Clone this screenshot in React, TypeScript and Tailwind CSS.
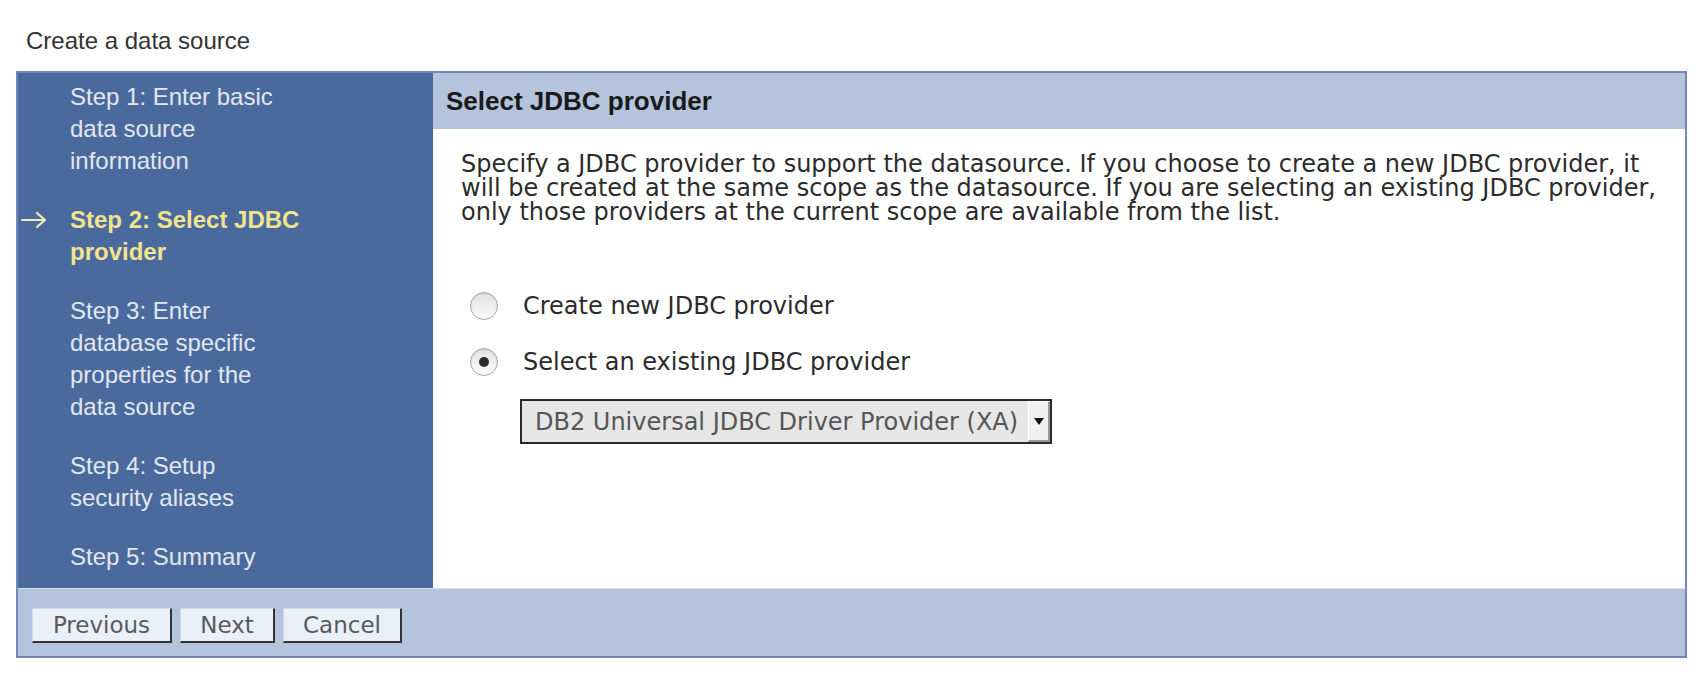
import React from "react";

const sans = { fontFamily: '"Liberation Sans", Arial, sans-serif' };
const deja = { fontFamily: '"DejaVu Sans", Verdana, sans-serif' };

const steps = [
  { text: "Step 1: Enter basic data source information", active: false },
  { text: "Step 2: Select JDBC provider", active: true },
  { text: "Step 3: Enter database specific properties for the data source", active: false },
  { text: "Step 4: Setup security aliases", active: false },
  { text: "Step 5: Summary", active: false },
];

function Radio({ checked }: { checked?: boolean }) {
  return (
    <div className="flex h-[28px] w-[28px] items-center justify-center rounded-full border border-[#a8a8a8] bg-gradient-to-b from-[#e2e2e2] to-[#fbfbfb] shadow-[inset_0_1px_2px_rgba(0,0,0,0.12)]">
      {checked && <div className="h-[10px] w-[10px] rounded-full bg-[#2a2a2a]" />}
    </div>
  );
}

function Btn({ label, w }: { label: string; w: string }) {
  return (
    <div
      className={`${w} flex h-[35px] items-center justify-center border-t border-l border-t-[#d8d8d8] border-l-[#d8d8d8] border-r-2 border-b-2 border-r-[#333] border-b-[#333] bg-[#eaf0fa] text-[23px] text-[#5a5a5a]`}
      style={deja}
    >
      {label}
    </div>
  );
}

export default function App() {
  return (
    <div className="min-h-[676px] w-[1708px] bg-white">
      <div className="pl-[26px] pt-[27px] text-[24px] leading-[28px] text-[#333]" style={sans}>
        Create a data source
      </div>
      <div className="ml-[16px] mt-[16px] w-[1671px] border-2 border-[#6f88b9]">
        <div className="flex">
          <div className="w-[415px] shrink-0 bg-[#4a6a9e] pb-[15px] pt-[8px]" style={sans}>
            {steps.map((s, i) => (
              <div key={i} className={`flex ${i < steps.length - 1 ? "mb-[27px]" : ""}`}>
                <div className="flex h-[32px] w-[52px] shrink-0 items-center pl-[3px]">
                  {s.active && (
                    <svg width="26" height="18" viewBox="0 0 26 18">
                      <path
                        d="M1 9 H24 M16 2 L24 9 L16 16"
                        fill="none"
                        stroke="#f4ecb4"
                        strokeWidth="2.2"
                        strokeLinecap="round"
                        strokeLinejoin="round"
                      />
                    </svg>
                  )}
                </div>
                <div
                  className={`w-[231px] text-[24px] leading-[32px] ${
                    s.active ? "font-bold text-[#f2e48f]" : "text-[#e3e7ef]"
                  }`}
                >
                  {s.text}
                </div>
              </div>
            ))}
          </div>
          <div className="flex-1 bg-white">
            <div
              className="flex h-[56px] items-center bg-[#b4c4dc] pl-[13px] text-[26px] font-bold text-[#1a1a1a]"
              style={sans}
            >
              Select JDBC provider
            </div>
            <div className="pl-[28px] pr-[12px] pt-[23px] text-[#2b2b2b]" style={deja}>
              <p className="text-[24px] leading-[24px]">
                Specify a JDBC provider to support the datasource. If you choose to create a new JDBC provider, it
                will be created at the same scope as the datasource. If you are selecting an existing JDBC provider,
                only those providers at the current scope are available from the list.
              </p>
              <div className="ml-[9px] mt-[62px] flex flex-col gap-[16px]">
                <div className="flex h-[40px] items-center gap-[25px]">
                  <Radio />
                  <span className="text-[24px]">Create new JDBC provider</span>
                </div>
                <div className="flex h-[40px] items-center gap-[25px]">
                  <Radio checked />
                  <span className="text-[24px]">Select an existing JDBC provider</span>
                </div>
              </div>
              <div className="ml-[59px] mt-[17px] flex h-[45px] w-[532px] items-stretch border-2 border-[#2a2a2a] bg-[#e6e6e6]">
                <div className="flex flex-1 items-center pl-[13px] text-[24px] text-[#555]">
                  DB2 Universal JDBC Driver Provider (XA)
                </div>
                <div className="flex w-[22px] items-center justify-center border-l border-t border-l-white border-t-white border-r-2 border-b-2 border-r-[#9a9a9a] border-b-[#9a9a9a] bg-[#f0f0f0]">
                  <svg width="10" height="7" viewBox="0 0 10 7">
                    <path d="M0 0 L10 0 L5 7 Z" fill="#111" />
                  </svg>
                </div>
              </div>
              <div className="h-[143px]" />
            </div>
          </div>
        </div>
        <div className="flex h-[68px] items-start gap-[8px] border-t border-[#d6dfee] bg-[#b4c4dc] pl-[14px] pt-[19px]">
          <Btn label="Previous" w="w-[140px]" />
          <Btn label="Next" w="w-[95px]" />
          <Btn label="Cancel" w="w-[119px]" />
        </div>
      </div>
    </div>
  );
}
